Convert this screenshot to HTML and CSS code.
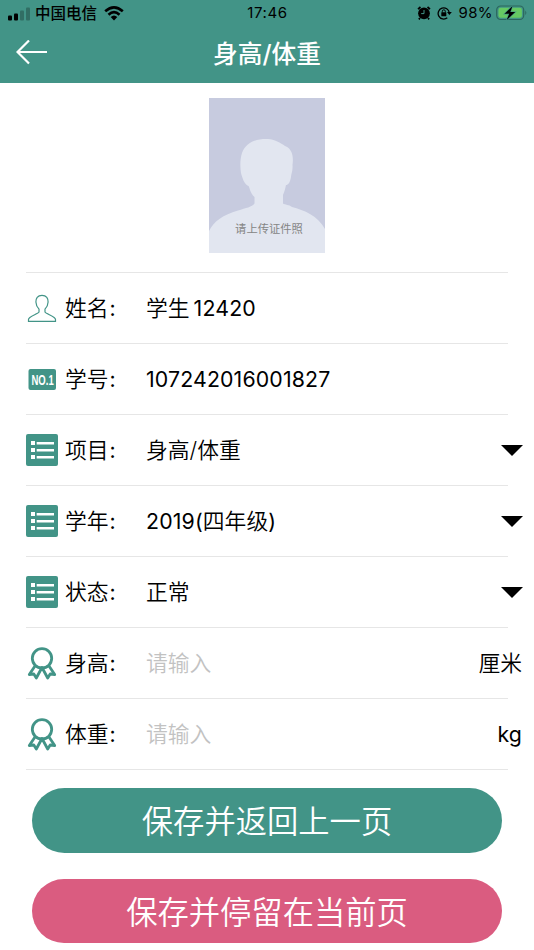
FILE: index.html
```html
<!DOCTYPE html>
<html lang="zh-CN">
<head>
<meta charset="utf-8">
<title>身高/体重</title>
<link rel="stylesheet" href="styles.css">
</head>
<body>
<svg width="0" height="0" class="defs" aria-hidden="true">
  <symbol id="list" viewBox="0 0 32 32"><rect width="32" height="32" rx="2" fill="#429487"/><path fill="#fff" d="M5 7h4v4H5zM10.700 8H28v2.500H10.700zM5 14h4v4H5zM10.700 15H28v2.500H10.700zM5 21h4v4H5zM10.700 22H28v2.500H10.700z"/></symbol>
  <symbol id="medal" viewBox="0 0 32 34"><g fill="none" stroke="#429487" stroke-width="2.800" stroke-linejoin="round"><circle cx="16" cy="12.300" r="9.700"/><path d="M9 20L3.300 28.500L7.800 28L10.300 32L16 21.500L21.700 32L24.200 28L28.700 28.500L23 20"/></g></symbol>
</svg>
<header class="header">
  <div class="status">
    <div class="carrier">
      <svg class="signal" width="23" height="16" viewBox="0 0 23 16"><rect x="0" y="10.500" width="4" height="5" rx="1"/><rect x="6" y="8.500" width="4" height="7" rx="1"/><g opacity=".25"><rect x="12" y="5.500" width="4" height="10" rx="1"/><rect x="18" y="2.500" width="4" height="13" rx="1"/></g></svg>
      <span class="carrier-name">中国电信</span>
      <svg class="wifi" width="20" height="16" viewBox="0 0 20 16"><g fill="none" stroke="#000" stroke-width="2.6"><path d="M1.200 6.300Q10-1.700 18.800 6.300"/><path d="M4.500 9.700Q10 4.500 15.500 9.700"/></g><path d="M6.700 12.100Q10 9.100 13.300 12.100L10 15.500z"/></svg>
    </div>
    <span class="clock">17:46</span>
    <div class="indicators">
      <svg width="14" height="14" viewBox="0 0 14 14"><circle cx="7" cy="7.300" r="5.900"/><path d="M1 3.200L3.500 1M13 3.200L10.500 1M3 12l-1.200 1.400M11 12l1.200 1.400" stroke="#000" stroke-width="1.700" fill="none"/><path d="M7 4v3.600H4.200" stroke="#429487" stroke-width="1" fill="none"/></svg>
      <svg class="lock" width="15" height="14" viewBox="0 0 15 14"><path d="M10.300 11.800A5.600 5.600 0 1 1 12.300 6.800" fill="none" stroke="#000" stroke-width="1.300"/><path d="M10 6h4.800L12.400 9z"/><rect x="4.300" y="6.300" width="5" height="3.900" rx=".5"/><path d="M5.300 6.500V5.300a1.500 1.500 0 0 1 3 0v1.200" fill="none" stroke="#000"/></svg>
      <span class="percent">98%</span>
      <svg class="battery" width="31" height="16" viewBox="0 0 31 16"><rect x=".7" y="1" width="27" height="13.500" rx="4" fill="none" stroke="#2c665d" stroke-width="1.200"/><rect x="2.500" y="2.800" width="23.400" height="10" rx="2.200" fill="#66c963"/><path d="M29.300 5.500q2 2.300 0 4.600z" fill="#2c665d"/><path d="M16.500 1L8.500 8.800h4.700L10.700 15l8.500-8h-4.900z" stroke="#429487" stroke-width="1.200" paint-order="stroke"/></svg>
    </div>
  </div>
  <div class="nav">
    <svg class="back" width="32" height="26" viewBox="0 0 32 26"><path d="M13 .5L1.500 12L13 23.500M1.500 12H31" fill="none" stroke="#fff" stroke-width="2.200"/></svg>
    <h1>身高/体重</h1>
  </div>
</header>
<main>
  <div class="photo">
    <svg class="avatar" width="116" height="155" viewBox="0 0 116 155"><path fill="#e2e6f0" d="M0 133C5 123 14 117 29 112.500C37 110 43 109 45.500 105.500V99C41 95 40.500 89 39.500 88C35.500 87 33 79 32 75C31 69 31 61 33 55C37 44 48 40.500 59 41C65 41 72 45 76 48C84 51 84.500 60 83.500 67C84 73 82 76 82 79C81 85 79 87 77 87C76 92 75 94.500 74 97V105.500C76 107 80 106.500 83 109C95 112 109 118 116 131V155H0z"/></svg>
    <span class="photo-hint">请上传证件照</span>
  </div>
  <div class="form">
    <div class="row">
      <svg class="icon" width="32" height="34" viewBox="0 0 32 34"><path d="M16 4.300C11.500 4.300 9.700 7.500 9.900 11C10 14.500 11.500 16.500 13 18.200V21C12 23.200 2.500 25 2.500 28.500V30.300H29.500V28.500C29.500 25 20 23.200 19 21V18.200C20.500 16.500 22 14.500 22.100 11C22.300 7.500 20.500 4.300 16 4.300z" fill="none" stroke="#429487" stroke-width="1.200"/></svg>
      <span class="label">姓名<span class="num">:</span></span><span class="value">学生<span class="num gap">12420</span></span>
    </div>
    <div class="row">
      <svg class="icon" width="32" height="23" viewBox="0 0 32 23"><rect x="2.500" y="1" width="27.500" height="21" rx="2" fill="#429487"/><text class="badge" transform="translate(5.500 16.500) scale(.68 1)">NO.1</text></svg>
      <span class="label">学号<span class="num">:</span></span><span class="value num">107242016001827</span>
    </div>
    <div class="row">
      <svg class="icon" width="32" height="32"><use href="#list"/></svg>
      <span class="label">项目<span class="num">:</span></span><span class="value">身高/体重</span><span class="caret"></span>
    </div>
    <div class="row">
      <svg class="icon" width="32" height="32"><use href="#list"/></svg>
      <span class="label">学年<span class="num">:</span></span><span class="value"><span class="num">2019(</span>四年级<span class="num">)</span></span><span class="caret"></span>
    </div>
    <div class="row">
      <svg class="icon" width="32" height="32"><use href="#list"/></svg>
      <span class="label">状态<span class="num">:</span></span><span class="value">正常</span><span class="caret"></span>
    </div>
    <div class="row">
      <svg class="icon" width="32" height="34"><use href="#medal"/></svg>
      <span class="label">身高<span class="num">:</span></span><span class="value placeholder">请输入</span><span class="unit">厘米</span>
    </div>
    <div class="row">
      <svg class="icon" width="32" height="34"><use href="#medal"/></svg>
      <span class="label">体重<span class="num">:</span></span><span class="value placeholder">请输入</span><span class="unit num">kg</span>
    </div>
  </div>
  <div class="actions">
    <button class="btn">保存并返回上一页</button>
    <button class="btn stay">保存并停留在当前页</button>
  </div>
</main>
</body>
</html>
```
FILE: styles.css
```css
* { box-sizing: border-box; }
body {
  margin: 0;
  width: 534px;
  height: 950px;
  overflow: hidden;
  background: #fff;
  color: #000;
  font-family: Inter, "Noto Sans CJK SC", sans-serif;
}
.defs { position: absolute; }
svg { display: block; flex: none; }
.header { height: 83px; background: #429487; }
.status {
  height: 26px;
  padding: 0 7px 0 8px;
  display: grid;
  grid-template-columns: 1fr auto 1fr;
  align-items: center;
  font-size: 15px;
  line-height: 26px;
}
.carrier, .indicators { display: flex; align-items: center; }
.indicators { justify-content: flex-end; }
.carrier-name { margin-left: 4px; padding-top: 1px; font-size: 15.500px; line-height: 25px; font-weight: 500; }
.wifi { margin-left: 7px; }
.clock { font-weight: 400; letter-spacing: .6px; }
.lock { margin-left: 6px; }
.percent { margin: 0 3px 0 6px; letter-spacing: .4px; }
.nav {
  height: 57px;
  padding: 0 16px 4px;
  display: grid;
  grid-template-columns: 32px 1fr 32px;
  align-items: center;
}
h1 {
  margin: 0;
  padding-top: 2px;
  color: #fff;
  font-size: 24.700px;
  line-height: 36px;
  font-weight: 500;
  text-align: center;
}
.photo {
  width: 116px;
  height: 155px;
  margin: 15px auto 19px;
  display: grid;
  background: #c7cbdf;
}
.avatar, .photo-hint { grid-area: 1 / 1; }
.photo-hint {
  align-self: end;
  padding: 0 0 15px 4px;
  color: #858585;
  font-size: 11.300px;
  line-height: 18px;
  text-align: center;
}
.form { width: 482px; margin-left: 26px; border-top: 1px solid #e6e6e6; }
.row {
  height: 71px;
  display: flex;
  align-items: center;
  border-bottom: 1px solid #e6e6e6;
  font-size: 21.800px;
  font-weight: 350;
  line-height: 32px;
  white-space: nowrap;
}
.icon { width: 32px; flex: none; }
.badge { fill: #fff; font: bold 14px "Liberation Sans", sans-serif; }
.label { width: 81px; margin-left: 7px; }
.value { flex: 1; }
.num { font-size: 21.300px; font-weight: 400; letter-spacing: .15px; }
.gap { margin-left: 4px; }
.label .num { margin-left: 1px; }
.placeholder { color: #c2c2c2; }
.caret {
  margin-right: -15px;
  border: solid transparent;
  border-width: 11px 11px 0;
  border-top-color: #000;
}
.unit { margin-right: -14px; }
.actions {
  padding: 18px 32px 0;
  display: flex;
  flex-direction: column;
  gap: 26px;
}
.btn {
  height: 64.500px;
  border: 0;
  border-radius: 33px;
  padding: 0;
  background: #429487;
  color: #fff;
  font: 350 31.300px/64px "Noto Sans CJK SC", sans-serif;
}
.stay { background: #da5c80; }
```
